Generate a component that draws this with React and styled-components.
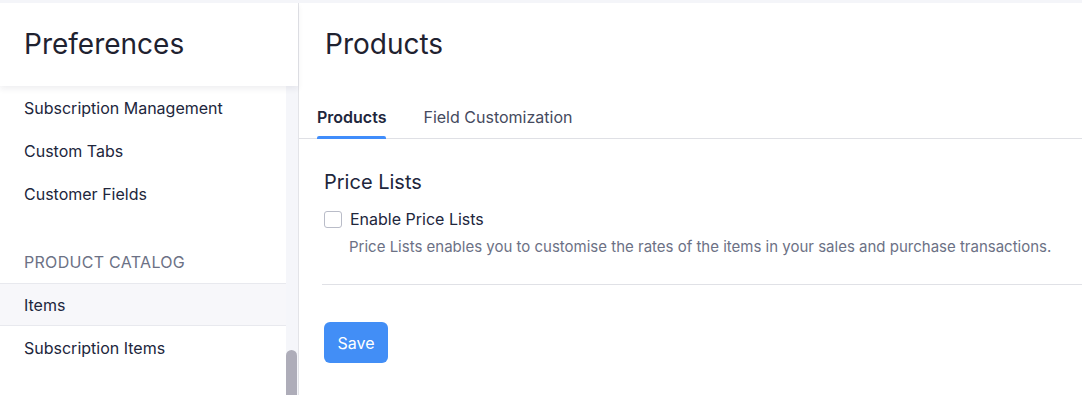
import styled, { createGlobalStyle } from "styled-components";

const GlobalStyle = createGlobalStyle`
  html, body {
    margin: 0;
    padding: 0;
    background: #f4f5f9;
    font-family: Inter, "Noto Sans", "Liberation Sans", sans-serif;
    color: #21263c;
  }
  * { box-sizing: border-box; }
`;

const Shell = styled.div`
  display: flex;
  height: 392px;
  margin-top: 3px;
  background: #ffffff;
  overflow: hidden;
`;

const Sidebar = styled.aside`
  width: 299px;
  flex-shrink: 0;
  display: flex;
  flex-direction: column;
  border-right: 1px solid #e3e4e8;
  background: #ffffff;
`;

const SidebarHeader = styled.div`
  height: 83px;
  flex-shrink: 0;
  display: flex;
  align-items: center;
  padding: 0 24px 1px;
  background: #ffffff;
  box-shadow: 0 3px 6px rgba(30, 35, 60, 0.07);
  position: relative;
  z-index: 1;
`;

const SidebarTitle = styled.h1`
  margin: 0;
  font-size: 28px;
  font-weight: 400;
  color: #1f2230;
`;

const SidebarBody = styled.div`
  flex: 1;
  display: flex;
  min-height: 0;
`;

const NavList = styled.nav`
  width: 286px;
  display: flex;
  flex-direction: column;
`;

const NavItem = styled.div`
  height: 43px;
  display: flex;
  align-items: center;
  padding-left: 24px;
  font-size: 16px;
  color: #21263c;
  background: ${({ $active }) => ($active ? "#f7f7fa" : "transparent")};
  border-top: 1px solid ${({ $active }) => ($active ? "#e8e9ee" : "transparent")};
  border-bottom: 1px solid ${({ $active }) => ($active ? "#e8e9ee" : "transparent")};
`;

const SectionLabel = styled.div`
  height: 42px;
  margin-top: 26px;
  display: flex;
  align-items: center;
  padding-left: 24px;
  font-size: 16px;
  letter-spacing: 0.3px;
  color: #6c7185;
  text-transform: uppercase;
`;

const ScrollTrack = styled.div`
  width: 12px;
  background: #f5f6fa;
  display: flex;
  flex-direction: column;
  justify-content: flex-end;
`;

const ScrollThumb = styled.div`
  height: 45px;
  width: 11px;
  border-radius: 6px 6px 0 0;
  background: #aeadb9;
`;

const Main = styled.main`
  flex: 1;
  display: flex;
  flex-direction: column;
  min-width: 0;
`;

const MainHeader = styled.div`
  height: 84px;
  display: flex;
  align-items: center;
  padding: 0 26px 3px;
`;

const MainTitle = styled.h2`
  margin: 0;
  font-size: 28px;
  font-weight: 400;
  color: #1f2230;
`;

const Tabs = styled.div`
  display: flex;
  gap: 37px;
  padding-left: 18px;
  border-bottom: 1px solid #dfe0e5;
`;

const Tab = styled.div`
  position: relative;
  height: 51px;
  display: flex;
  align-items: center;
  padding-top: 15px;
  padding-bottom: 7px;
  font-size: 16px;
  font-weight: ${({ $active }) => ($active ? 600 : 400)};
  color: ${({ $active }) => ($active ? "#21263c" : "#454a5e")};

  &::after {
    content: "";
    display: ${({ $active }) => ($active ? "block" : "none")};
    position: absolute;
    left: 0;
    right: 0;
    bottom: -1px;
    height: 3px;
    border-radius: 2px 2px 0 0;
    background: #408dfb;
  }
`;

const Content = styled.section`
  padding: 31px 0 0 25px;
`;

const SectionTitle = styled.h3`
  margin: 0 0 15px;
  font-size: 20px;
  font-weight: 400;
  color: #21263c;
`;

const CheckRow = styled.label`
  display: flex;
  align-items: center;
  gap: 8px;
  font-size: 16px;
  color: #21263c;
`;

const Box = styled.span`
  width: 18px;
  height: 17px;
  border: 1px solid #b9bcc8;
  border-radius: 3px;
  background: #fff;
`;

const Help = styled.p`
  margin: 8px 0 0 25px;
  font-size: 15px;
  color: #6c7185;
`;

const Divider = styled.hr`
  margin: 28px 0 0 -2px;
  border: 0;
  border-top: 1px solid #e0e1e6;
`;

const SaveButton = styled.button`
  margin-top: 37px;
  width: 64px;
  height: 41px;
  border: 0;
  border-radius: 6px;
  background: #428ef6;
  color: #ffffff;
  font-family: inherit;
  font-size: 16px;
`;

export default function App() {
  return (
    <>
      <GlobalStyle />
      <Shell>
        <Sidebar>
          <SidebarHeader>
            <SidebarTitle>Preferences</SidebarTitle>
          </SidebarHeader>
          <SidebarBody>
            <NavList>
              <NavItem>Subscription Management</NavItem>
              <NavItem>Custom Tabs</NavItem>
              <NavItem>Customer Fields</NavItem>
              <SectionLabel>Product Catalog</SectionLabel>
              <NavItem $active>Items</NavItem>
              <NavItem>Subscription Items</NavItem>
            </NavList>
            <ScrollTrack>
              <ScrollThumb />
            </ScrollTrack>
          </SidebarBody>
        </Sidebar>
        <Main>
          <MainHeader>
            <MainTitle>Products</MainTitle>
          </MainHeader>
          <Tabs>
            <Tab $active>Products</Tab>
            <Tab>Field Customization</Tab>
          </Tabs>
          <Content>
            <SectionTitle>Price Lists</SectionTitle>
            <CheckRow>
              <Box />
              Enable Price Lists
            </CheckRow>
            <Help>
              Price Lists enables you to customise the rates of the items in your sales and purchase transactions.
            </Help>
            <Divider />
            <SaveButton>Save</SaveButton>
          </Content>
        </Main>
      </Shell>
    </>
  );
}
